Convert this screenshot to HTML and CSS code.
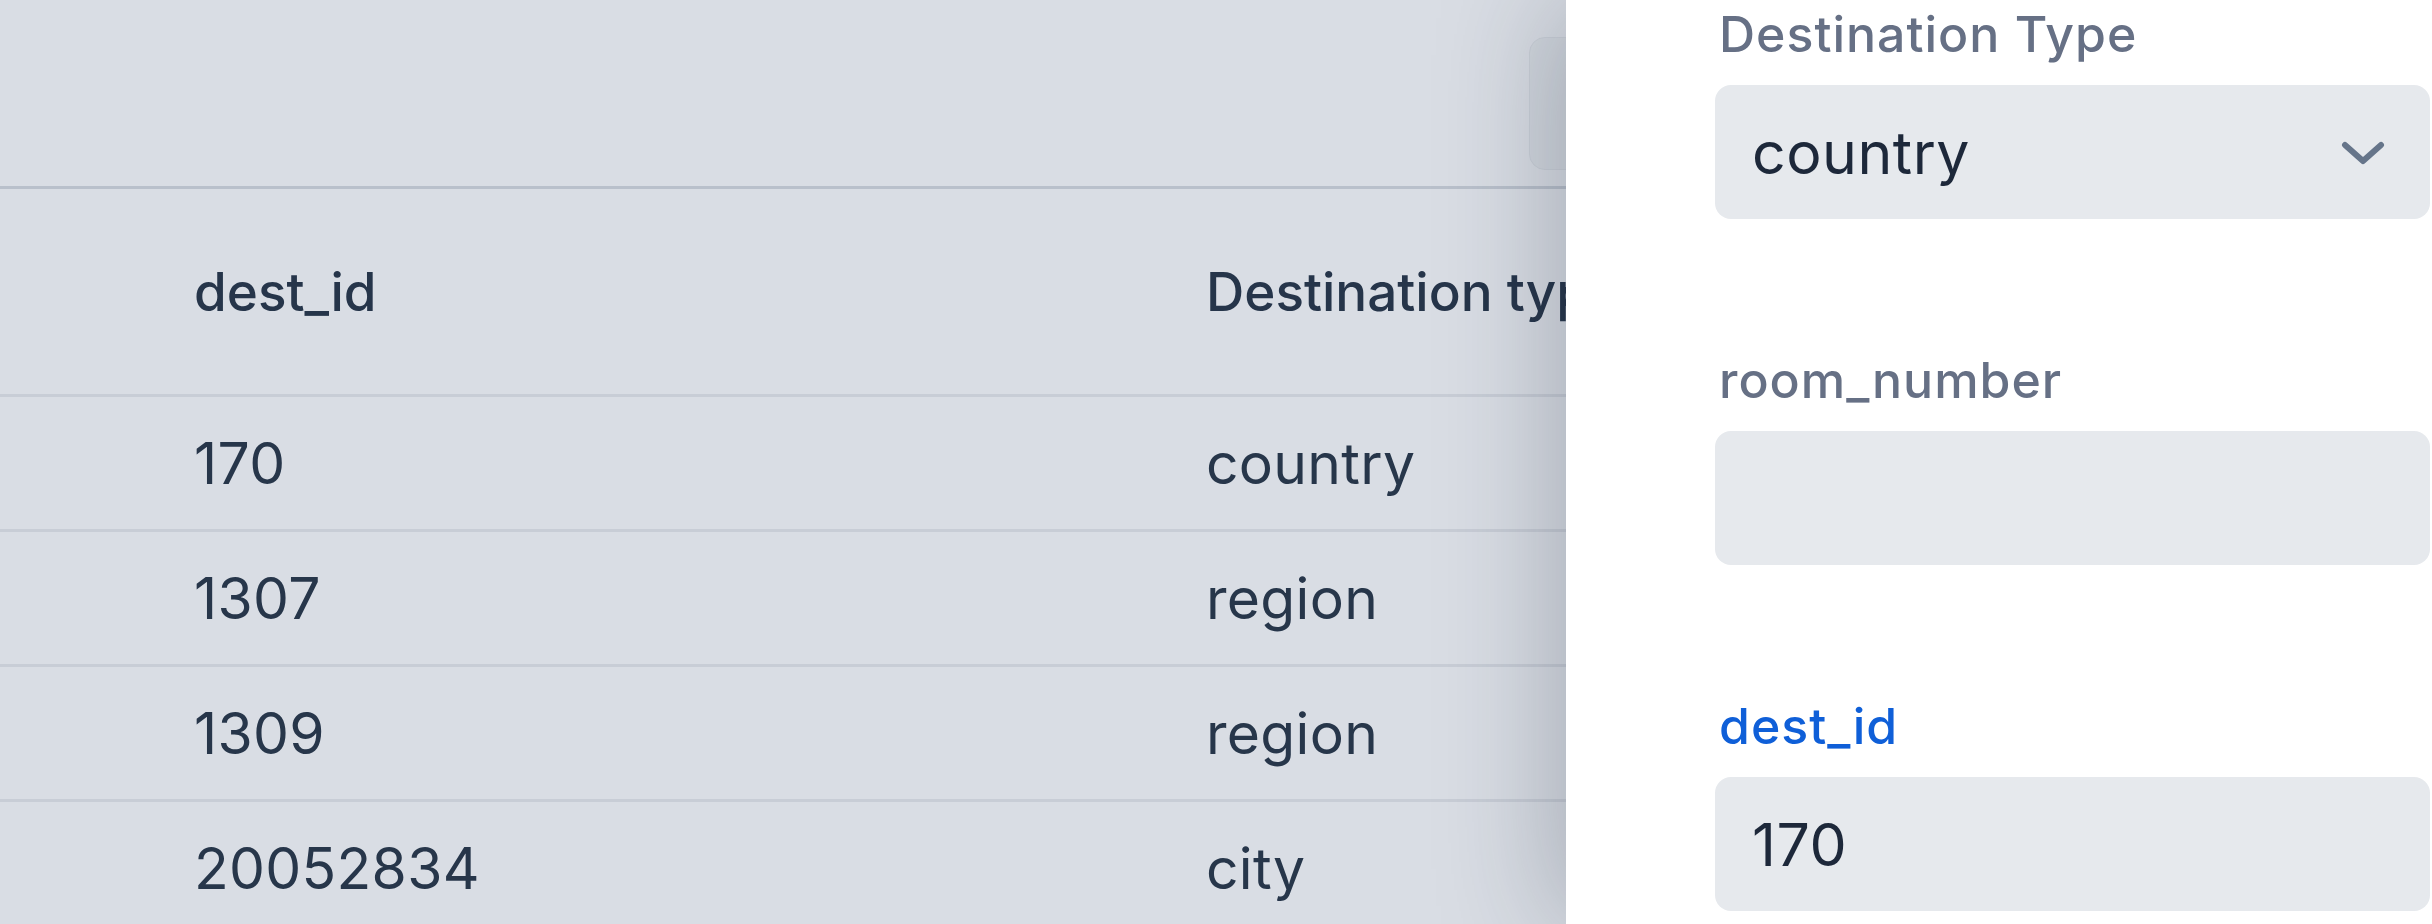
FILE: index.html
```html
<!DOCTYPE html>
<html lang="en">
<head>
<meta charset="utf-8">
<title>Destinations</title>
<link rel="stylesheet" href="styles.css">
</head>
<body>
<div class="page">
  <div class="toolbar">
    <div class="toolbar-btn"></div>
  </div>
  <div class="table">
    <div class="row head">
      <div class="cell c1">dest_id</div>
      <div class="cell c2">Destination type</div>
    </div>
    <div class="row">
      <div class="cell c1">170</div>
      <div class="cell c2">country</div>
    </div>
    <div class="row">
      <div class="cell c1">1307</div>
      <div class="cell c2">region</div>
    </div>
    <div class="row">
      <div class="cell c1">1309</div>
      <div class="cell c2">region</div>
    </div>
    <div class="row">
      <div class="cell c1">20052834</div>
      <div class="cell c2">city</div>
    </div>
  </div>
</div>
<aside class="panel">
  <div class="field">
    <label class="label">Destination Type</label>
    <div class="control select">
      <span class="value">country</span>
      <svg class="chevron" viewBox="0 0 44 24" width="44" height="24" aria-hidden="true">
        <path d="M4 4 L22 20 L40 4" fill="none" stroke="currentColor" stroke-width="6" stroke-linecap="round" stroke-linejoin="round"/>
      </svg>
    </div>
  </div>
  <div class="field">
    <label class="label">room_number</label>
    <div class="control"></div>
  </div>
  <div class="field">
    <label class="label active">dest_id</label>
    <div class="control"><span class="value">170</span></div>
  </div>
</aside>
</body>
</html>
```
FILE: styles.css
```css
html, body {
  margin: 0;
  padding: 0;
}
body {
  width: 2432px;
  height: 924px;
  overflow: hidden;
  background: #d9dde4;
  font-family: Inter, "Noto Sans", "Liberation Sans", sans-serif;
  color: #27364a;
}
.page {
  width: 2432px;
}
.toolbar {
  height: 189px;
  box-sizing: border-box;
  border-bottom: 3px solid #b9c0cb;
  display: flex;
  align-items: flex-start;
  padding: 37px 0 0 1529px;
}
.toolbar-btn {
  width: 280px;
  height: 133px;
  border-radius: 16px;
  background: #d2d7de;
  border: 1px solid #cbd0d8;
  box-sizing: border-box;
}
.row {
  display: grid;
  grid-template-columns: 1012px 1fr;
  padding-left: 194px;
  height: 132px;
  align-items: center;
  border-bottom: 3px solid #c8cdd6;
  font-size: 57px;
  letter-spacing: 0.3px;
  font-weight: 400;
}
.row.head {
  height: 205px;
  font-size: 53px;
  letter-spacing: 0;
  font-weight: 500;
  color: #26354a;
}
.cell {
  white-space: nowrap;
}
.panel {
  position: fixed;
  top: 0;
  right: 0;
  width: 866px;
  height: 924px;
  box-sizing: border-box;
  padding: 0 2px 0 149px;
  background: #ffffff;
  box-shadow: -10px 0 110px rgba(30, 41, 59, 0.28);
  overflow: hidden;
}
.field {
  display: flex;
  flex-direction: column;
  margin-bottom: 127px;
}
.label {
  font-size: 50px;
  line-height: 68px;
  letter-spacing: 1px;
  font-weight: 500;
  color: #667085;
  margin-bottom: 17px;
  padding-left: 4px;
}
.label.active {
  color: #0f5fd8;
}
.control {
  height: 134px;
  border-radius: 16px;
  background: #e6e9ed;
  display: flex;
  align-items: center;
  padding: 0 45px 0 37px;
  box-sizing: border-box;
  font-size: 59px;
  letter-spacing: 0.5px;
  color: #1d283a;
}
.select {
  justify-content: space-between;
}
.chevron {
  color: #66758a;
  margin-top: 2px;
}
```
